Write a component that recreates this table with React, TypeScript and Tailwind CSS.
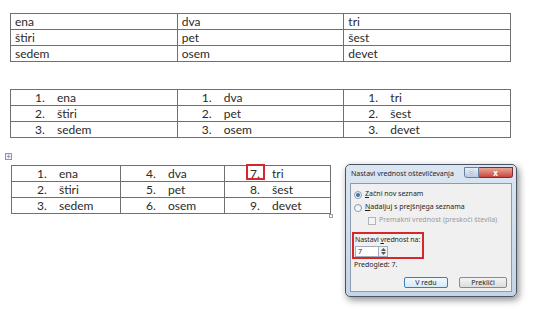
import React from "react";

const words = [
  ["ena", "dva", "tri"],
  ["štiri", "pet", "šest"],
  ["sedem", "osem", "devet"],
];

function Table1() {
  return (
    <div className="ml-[10px] w-[501px] grid grid-cols-3 gap-px bg-[#707070] p-px">
      {words.flat().map((t, i) => (
        <div key={i} className="bg-white h-[15px] pl-[4px] leading-[15px]">
          {t}
        </div>
      ))}
    </div>
  );
}

function Table2() {
  return (
    <div className="ml-[10px] w-[501px] grid grid-cols-3 gap-px bg-[#707070] p-px">
      {words.map((row, r) =>
        row.map((t, c) => (
          <div key={r + "-" + c} className="bg-white h-[15px] pl-[24px] flex items-center">
            <span className="w-[22px]">{r + 1}.</span>
            <span>{t}</span>
          </div>
        ))
      )}
    </div>
  );
}

function Table3() {
  return (
    <div className="relative ml-[11px] w-[320px]">
      <div className="absolute -left-[6px] -top-[12px] w-[7px] h-[7px] border border-[#8a94b8] bg-[#eef0fa] flex items-center justify-center text-[7px] leading-none text-[#5a6aa0]">
        +
      </div>
      <div className="grid grid-cols-[108px_103px_105px] gap-px bg-[#707070] p-px">
        {words.map((row, r) =>
          row.map((t, c) => (
            <div key={r + "-" + c} className="bg-white h-[15px] pl-[25px] flex items-center">
              <span className="relative w-[22px]">
                {c * 3 + r + 1}.
                {c === 2 && r === 0 && (
                  <span className="absolute -left-[4px] -top-[1px] w-[19px] h-[16px] border-2 border-[#d8262f]" />
                )}
              </span>
              <span>{t}</span>
            </div>
          ))
        )}
      </div>
      <div className="absolute -right-[2px] -bottom-[4px] w-[4px] h-[4px] border border-[#a0a0a0] bg-white" />
    </div>
  );
}

function Radio({ checked, label }: { checked?: boolean; label: React.ReactNode }) {
  return (
    <div className="flex items-center gap-[3px] h-[13px] whitespace-nowrap">
      <span className="shrink-0 w-[8px] h-[8px] rounded-full border border-[#8e9aab] bg-gradient-to-b from-[#e9edf2] to-white flex items-center justify-center">
        {checked && <span className="w-[4px] h-[4px] rounded-full bg-[#3a6fb5]" />}
      </span>
      <span>{label}</span>
    </div>
  );
}

function Dialog() {
  return (
    <div
      className="absolute left-[345px] top-[164px] w-[172px] h-[133px] rounded-[5px] border border-[#4a5563] bg-gradient-to-b from-[#dbe6f2] to-[#c5d4e6] shadow-[2px_3px_7px_rgba(0,0,0,0.45)] flex flex-col px-[4px] pb-[4px]"
      style={{ fontFamily: '"Noto Sans", "Open Sans", sans-serif' }}
    >
      <div className="h-[18px] flex items-start justify-between">
        <span className="mt-[4px] ml-[1px] text-[7px] leading-[9px] text-[#1e2630] whitespace-nowrap">
          Nastavi vrednost oštevilčevanja
        </span>
        <div className="flex shrink-0 mt-[2px] -mr-[1px]">
          <div className="w-[15px] h-[11px] rounded-bl-[3px] border border-[#6d7f96] bg-gradient-to-b from-[#e6eef8] to-[#b9cce4] text-[7px] leading-[9px] text-center font-bold text-white [text-shadow:0_0_1px_#334]">
            ?
          </div>
          <div className="w-[34px] h-[11px] rounded-br-[3px] border border-l-0 border-[#7a3030] bg-gradient-to-b from-[#e8a59c] to-[#c9463a] text-[8px] leading-[9px] text-center font-bold text-white">
            x
          </div>
        </div>
      </div>
      <div className="flex-1 border border-[#8d9bb0] bg-[#f0f0f0] text-[7px] text-[#1e1e1e] flex flex-col pl-[3px] pr-[4px] pt-[4px]">
        <Radio checked label={<><u>Z</u>ačni nov seznam</>} />
        <Radio label={<><u>N</u>adaljuj s prejšnjega seznama</>} />
        <div className="flex items-center gap-[3px] h-[13px] pl-[14px] text-[#9a9a9a] whitespace-nowrap">
          <span className="shrink-0 w-[8px] h-[8px] border border-[#b5b5b5] bg-[#f4f4f4]" />
          <span>Premakni vrednost (preskoči števila)</span>
        </div>
        <div className="mt-[5px] -ml-[2px] w-[72px] h-[27px] border-2 border-[#d8262f] pl-[1px] flex flex-col">
          <span className="leading-[9px] mt-[1px] whitespace-nowrap tracking-[-0.1px]">
            Nastavi <u>v</u>rednost na:
          </span>
          <div className="flex mt-[2px]">
            <div className="w-[24px] h-[11px] border border-[#a3aebd] bg-white pl-[2px] leading-[10px]">7</div>
            <div className="w-[9px] h-[11px] border border-l-0 border-[#a3aebd] bg-[#eef1f5] flex flex-col items-center justify-center gap-[1px]">
              <svg width="5" height="3" viewBox="0 0 5 3">
                <path d="M0 3 L2.5 0 L5 3 Z" fill="#555" />
              </svg>
              <svg width="5" height="3" viewBox="0 0 5 3">
                <path d="M0 0 L2.5 3 L5 0 Z" fill="#555" />
              </svg>
            </div>
          </div>
        </div>
        <span className="mt-[1px] leading-[10px]">Predogled: 7.</span>
        <div className="flex justify-end gap-[11px] mt-[7px]">
          <div className="w-[44px] h-[11px] rounded-[2px] border border-[#3c7fb1] bg-gradient-to-b from-[#f2f9fd] to-[#d4e9f7] text-center leading-[9px]">
            V redu
          </div>
          <div className="w-[48px] h-[11px] rounded-[2px] border border-[#8a8a8a] bg-gradient-to-b from-[#f4f4f4] to-[#dcdcdc] text-center leading-[9px]">
            Prekliči
          </div>
        </div>
      </div>
    </div>
  );
}

export default function App() {
  return (
    <div
      className="relative w-[545px] h-[309px] bg-white text-[12px] text-[#2a2a2a] overflow-hidden"
      style={{ fontFamily: 'Lato, "Open Sans", sans-serif' }}
    >
      <div className="pt-[13px] flex flex-col">
        <Table1 />
        <div className="mt-[27px]">
          <Table2 />
        </div>
        <div className="mt-[27px]">
          <Table3 />
        </div>
      </div>
      <Dialog />
    </div>
  );
}
